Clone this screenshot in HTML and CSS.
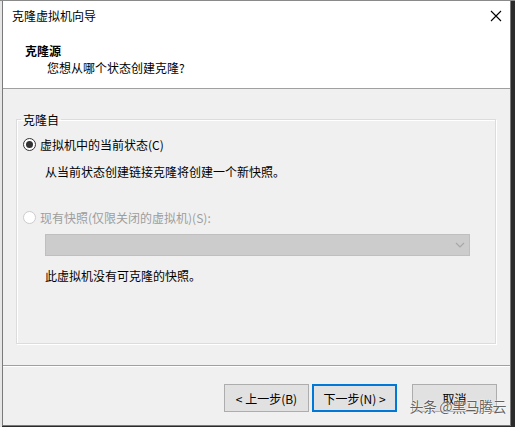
FILE: index.html
```html
<!DOCTYPE html>
<html lang="zh-CN">
<head>
    <meta charset="UTF-8">
    <meta name="viewport" content="width=device-width, initial-scale=1.0">
    <title>克隆虚拟机向导</title>
    <link rel="stylesheet" href="styles.css">
</head>
<body>
    <div class="screen">
        <div class="dialog">
            <div class="top">
                <div class="titlebar">
                    <span class="title">克隆虚拟机向导</span>
                    <svg class="close" width="12" height="12" viewBox="0 0 12 12">
                        <path d="M1 1 L11 11 M11 1 L1 11" stroke="#000" stroke-width="1.1" fill="none"/>
                    </svg>
                </div>
                <div class="heading">克隆源</div>
                <div class="subheading">您想从哪个状态创建克隆?</div>
            </div>

            <div class="content">
                <fieldset class="group">
                    <legend>克隆自</legend>
                    <div class="option">
                        <span class="radio checked"></span>
                        <span>虚拟机中的当前状态(C)</span>
                    </div>
                    <p class="hint">从当前状态创建链接克隆将创建一个新快照。</p>
                    <div class="option disabled">
                        <span class="radio"></span>
                        <span>现有快照(仅限关闭的虚拟机)(S):</span>
                    </div>
                    <div class="combo">
                        <svg width="10" height="6" viewBox="0 0 10 6">
                            <path d="M1 1 L5 5 L9 1" stroke="#a8a8a8" stroke-width="1.2" fill="none"/>
                        </svg>
                    </div>
                    <p class="hint note">此虚拟机没有可克隆的快照。</p>
                </fieldset>
            </div>

            <div class="footer">
                <button class="btn">&lt; 上一步(B)</button>
                <button class="btn default">下一步(N) &gt;</button>
                <button class="btn cancel">取消</button>
            </div>
        </div>
        <div class="watermark">头条 @黑马腾云</div>
    </div>
</body>
</html>
```

FILE: styles.css
```css
body {
    margin: 0;
    padding: 0;
    font-family: "Noto Sans CJK SC", "Noto Sans", sans-serif;
    font-size: 12px;
    color: #000;
}
.screen {
    position: relative;
    width: 515px;
    height: 427px;
    overflow: hidden;
    background: linear-gradient(to right, #e6e6e6 2px, #2b2b2b 2px);
    border-top: 1px solid #8a8a8a;
    box-sizing: border-box;
}
.dialog {
    margin-left: 2px;
    width: 509px;
    height: 425px;
    box-sizing: border-box;
    border: 1px solid #7a7a7a;
    border-top: none;
    background: #f0f0f0;
    display: flex;
    flex-direction: column;
}
.top {
    height: 88px;
    box-sizing: border-box;
    background: #fff;
    border-bottom: 1px solid #a0a0a0;
}
.titlebar {
    height: 29px;
    display: flex;
    align-items: center;
    justify-content: space-between;
    padding: 0 8px 0 9px;
}
.title {
    line-height: 29px;
}
.heading {
    margin-top: 12px;
    padding-left: 22px;
    font-weight: bold;
    line-height: 17px;
}
.subheading {
    padding-left: 44px;
    line-height: 17px;
}
.content {
    height: 276px;
    padding: 22px 14px 0 13px;
    box-sizing: border-box;
}
.group {
    margin: 0;
    padding: 0 0 59px 0;
    border: 1px solid #dcdcdc;
    box-shadow: inset 1px 1px 0 #fff, 1px 1px 0 #fff;
    min-width: 0;
}
.group legend {
    margin-left: 4px;
    padding: 0 2px;
    line-height: 17px;
}
.option {
    display: flex;
    align-items: center;
    gap: 4px;
    margin: 8px 0 0 6px;
    line-height: 17px;
}
.radio {
    width: 13px;
    height: 13px;
    box-sizing: border-box;
    border-radius: 50%;
    border: 1px solid #333;
    background: #fff;
    display: flex;
    align-items: center;
    justify-content: center;
}
.radio.checked::after {
    content: "";
    width: 7px;
    height: 7px;
    border-radius: 50%;
    background: #333;
}
.option.disabled {
    margin-top: 29px;
    color: #9d9d9d;
}
.option.disabled .radio {
    border-color: #cccccc;
}
.hint {
    margin: 10px 0 0 28px;
    line-height: 17px;
}
.combo {
    margin: 8px 0 0 28px;
    width: 425px;
    height: 22px;
    box-sizing: border-box;
    background: #cccccc;
    border: 1px solid #bfbfbf;
    display: flex;
    align-items: center;
    justify-content: flex-end;
    padding-right: 4px;
}
.hint.note {
    margin-top: 11px;
}
.footer {
    height: 60px;
    box-sizing: border-box;
    border-top: 1px solid #a0a0a0;
    box-shadow: inset 0 1px 0 #fff;
    padding: 18px 13px 0 0;
    display: flex;
    justify-content: flex-end;
    align-items: flex-start;
}
.btn {
    width: 85px;
    height: 28px;
    margin-left: 3px;
    background: #e1e1e1;
    border: 1px solid #adadad;
    font-family: inherit;
    font-size: 12px;
    color: #000;
    padding: 0;
}
.btn.default {
    border: 2px solid #0078d7;
}
.btn.cancel {
    margin-left: 15px;
}
.watermark {
    position: absolute;
    right: 9px;
    bottom: 11px;
    font-size: 14px;
    color: rgba(70, 70, 70, 0.85);
    text-shadow: 0 0 2px #fff, 0 0 1px #fff;
    letter-spacing: -0.5px;
}
```
